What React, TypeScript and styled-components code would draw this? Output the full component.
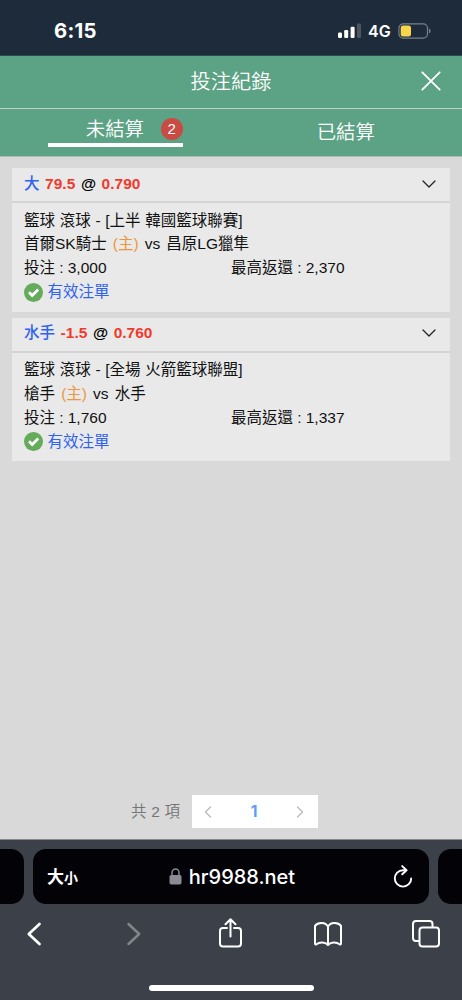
import React from 'react';
import styled, { createGlobalStyle } from 'styled-components';

const GlobalStyle = createGlobalStyle`
  * { box-sizing: border-box; }
  body { margin: 0; background: #d9d9d9; }
`;

const Screen = styled.div`
  display: flex;
  flex-direction: column;
  width: 462px;
  height: 1000px;
  overflow: hidden;
  background: #d9d9d9;
  font-family: 'Liberation Sans', 'Noto Sans CJK TC', sans-serif;
  font-size: 15.5px;
  color: #111;
  white-space: nowrap;
`;

const StatusBar = styled.div`
  display: flex;
  justify-content: space-between;
  height: 56px;
  padding: 20px 31px 0 54px;
  background: #1e2b3b;
  border-bottom: 1px solid #2c4a50;
  color: #fff;
  font-family: Inter, sans-serif;
`;

const Clock = styled.div`
  font-size: 20.3px;
  font-weight: 700;
  line-height: 22px;
  letter-spacing: 0.3px;
`;

const StatusIcons = styled.div`
  display: flex;
  align-items: center;
  height: 22px;
`;

const Network = styled.span`
  width: 30px;
  font-size: 16px;
  font-weight: 600;
  line-height: 22px;
`;

const Header = styled.header`
  display: grid;
  grid-template-columns: 40px 1fr 40px;
  align-items: center;
  justify-items: center;
  height: 53px;
  padding: 0 11px 2px 11px;
  background: #5ca284;
  border-bottom: 1px solid #c0cec4;
  color: #fff;
`;

const Title = styled.h1`
  grid-column: 2;
  margin: 0;
  padding-top: 2px;
  text-align: center;
  font-size: 20.2px;
  font-weight: 350;
  line-height: 30px;
`;

const Tabs = styled.nav`
  display: flex;
  height: 48px;
  background: #5ca284;
  border-bottom: 1px solid #a3c0b1;
`;

const Tab = styled.div<{ $active?: boolean }>`
  display: flex;
  flex: 1;
  justify-content: center;
  padding: ${p => (p.$active ? '4px 0 0' : '8px 1px 0 0')};
  color: #fff;
  font-size: 19.4px;
  font-weight: 350;
  line-height: 30px;
`;

const TabLabel = styled.div`
  display: flex;
  align-items: center;
  justify-content: space-between;
  width: 135px;
  height: 34px;
  padding: 1px 0 0 38px;
  border-bottom: 4px solid #fff;
`;

const Badge = styled.span`
  display: flex;
  align-items: center;
  justify-content: center;
  width: 22px;
  height: 22px;
  border-radius: 50%;
  background: #c94b43;
  font-size: 15px;
  font-weight: 400;
`;

const BetList = styled.main`
  display: flex;
  flex: 1;
  flex-direction: column;
  gap: 6px;
  padding: 11px 12px 0;
`;

const Card = styled.article`
  background: #e9e9e9;
`;

const CardHeader = styled.div`
  display: flex;
  align-items: center;
  justify-content: space-between;
  height: 35px;
  padding: 0 14px 2px 12px;
  border-bottom: 2px solid #d4d4d4;
`;

const Selection = styled.div`
  display: flex;
  gap: 5.6px;
  font-weight: 700;
  line-height: 32px;
  color: #f03a2c;
`;

const Pick = styled.span`
  color: #2f62f0;
  font-weight: 500;
`;

const At = styled.span`
  color: #000;
`;

const CardBody = styled.div`
  height: 108.5px;
  padding: 5.5px 12px 0;
  line-height: 24px;
`;

const Line = styled.div`
  height: 23.8px;
  word-spacing: 0.4px;
`;

const MatchLine = styled(Line)`
  word-spacing: 1.8px;
`;

const AmountLine = styled(Line)`
  display: grid;
  grid-template-columns: 207px 1fr;
  word-spacing: -0.1px;
`;

const Home = styled.span`
  color: #ee963f;
`;

const Status = styled.div`
  display: flex;
  align-items: center;
  gap: 4.5px;
  height: 25px;
  color: #2f62f0;
`;

const Pager = styled.div`
  display: flex;
  justify-content: center;
  gap: 12px;
  height: 44px;
  padding-right: 13px;
  color: #747474;
  line-height: 33px;
`;

const Pages = styled.div`
  display: flex;
  align-items: center;
  justify-content: space-between;
  width: 126px;
  height: 33px;
  padding: 0 14px 0 12px;
  background: #fff;
`;

const Total = styled.span`
  font-weight: 350;
  word-spacing: 0.4px;
`;

const Page = styled.span`
  color: #5c9cf5;
  font-family: Inter, sans-serif;
  font-weight: 700;
`;

const Browser = styled.footer`
  display: flex;
  flex-direction: column;
  height: 161px;
  background: #3c4149;
  border-top: 1px solid #85878a;
  color: #fff;
`;

const AddressRow = styled.div`
  display: grid;
  grid-template-columns: 24px 396px 24px;
  gap: 9px;
  height: 65px;
  padding-top: 9px;
`;

const SideTab = styled.div<{ $right?: boolean }>`
  height: 55px;
  border-radius: ${p => (p.$right ? '13px 0 0 13px' : '0 13px 13px 0')};
  background: #020207;
`;

const AddressBar = styled.div`
  display: grid;
  grid-template-columns: 60px 1fr 60px;
  align-items: center;
  height: 55px;
  padding: 0 16px 0 14px;
  border-radius: 13px;
  background: #020207;
`;

const TextSize = styled.span`
  font-family: 'Noto Sans CJK TC', sans-serif;
  font-size: 17px;
  font-weight: 700;
  line-height: 28px;
`;

const SmallGlyph = styled.span`
  font-size: 14px;
`;

const Address = styled.div`
  display: flex;
  align-items: center;
  justify-content: center;
  gap: 7px;
  padding-left: 4px;
  font-family: Inter, sans-serif;
  font-size: 20px;
  font-weight: 500;
  line-height: 28px;
`;

const Reload = styled.div`
  display: flex;
  justify-content: flex-end;
`;

const Toolbar = styled.div`
  display: flex;
  align-items: center;
  justify-content: space-between;
  height: 56px;
  padding: 2px 21px 0 20px;
`;

const HomeIndicator = styled.div`
  width: 165px;
  height: 6px;
  margin: 24px 0 0 149px;
  border-radius: 3px;
  background: #fff;
`;

const Icon = styled.svg`
  display: block;
  flex: none;
  fill: none;
  stroke: currentColor;
  stroke-linecap: round;
  stroke-linejoin: round;
`;

interface Bet {
  pick: string;
  line: string;
  odds: string;
  league: string;
  home: string;
  away: string;
  stake: string;
  payout: string;
}

const bets: Bet[] = [
  { pick: '大', line: '79.5', odds: '0.790', league: '籃球 滾球 - [上半 韓國籃球聯賽]', home: '首爾SK騎士', away: '昌原LG獵隼', stake: '3,000', payout: '2,370' },
  { pick: '水手', line: '-1.5', odds: '0.760', league: '籃球 滾球 - [全場 火箭籃球聯盟]', home: '槍手', away: '水手', stake: '1,760', payout: '1,337' },
];

const BetCard = ({ bet }: { bet: Bet }) => (
  <Card>
    <CardHeader>
      <Selection>
        <Pick>{bet.pick}</Pick>
        <span>{bet.line}</span>
        <At>@</At>
        <span>{bet.odds}</span>
      </Selection>
      <Icon width="14" height="8" viewBox="0 0 14 8" strokeWidth="1.3" color="#222">
        <path d="M1 1l6 6 6-6" />
      </Icon>
    </CardHeader>
    <CardBody>
      <Line>{bet.league}</Line>
      <MatchLine>{bet.home} <Home>(主)</Home> vs {bet.away}</MatchLine>
      <AmountLine>
        <span>投注 : {bet.stake}</span>
        <span>最高返還 : {bet.payout}</span>
      </AmountLine>
      <Status>
        <Icon width="19" height="19" viewBox="0 0 19 19">
          <circle cx="9.5" cy="9.5" r="9.5" fill="#64ab5c" stroke="none" />
          <path d="M5 9.3l3.2 3.2 6-6" stroke="#fff" strokeWidth="2.7" strokeLinecap="butt" strokeLinejoin="miter" />
        </Icon>
        有效注單
      </Status>
    </CardBody>
  </Card>
);

export default function App() {
  return (
    <Screen>
      <GlobalStyle />
      <StatusBar>
        <Clock>6:15</Clock>
        <StatusIcons>
          <Icon width="31" height="16" viewBox="-1 0 31 16">
            <g fill="#fff" stroke="none">
              <rect x="0" y="9.5" width="4" height="5.5" rx="1.2" />
              <rect x="6.2" y="7" width="4" height="8" rx="1.2" />
              <rect x="12.6" y="3.7" width="4" height="11.3" rx="1.2" />
              <rect x="19" y="0.5" width="4" height="14.5" rx="1.2" fill="#4d5661" />
            </g>
          </Icon>
          <Network>4G</Network>
          <Icon width="33" height="16" viewBox="0 0 33 16">
            <rect x="0.9" y="0.9" width="28.6" height="14.2" rx="4.3" stroke="#78808a" strokeWidth="1.2" />
            <rect x="2.7" y="2.6" width="10.3" height="10.8" rx="2.5" fill="#f8d64c" stroke="none" />
            <path d="M31 5.5c2 .8 2 4.2 0 5z" fill="#78808a" stroke="none" />
          </Icon>
        </StatusIcons>
      </StatusBar>
      <Header>
        <Title>投注紀錄</Title>
        <Icon width="20" height="20" viewBox="0 0 20 20" strokeWidth="1.8">
          <path d="M1.3 1.3l17.4 17.4M18.7 1.3L1.3 18.7" />
        </Icon>
      </Header>
      <Tabs>
        <Tab $active>
          <TabLabel>
            未結算
            <Badge>2</Badge>
          </TabLabel>
        </Tab>
        <Tab>已結算</Tab>
      </Tabs>
      <BetList>
        {bets.map(bet => <BetCard key={bet.pick} bet={bet} />)}
      </BetList>
      <Pager>
        <Total>共 2 項</Total>
        <Pages>
          <Icon width="8" height="12" viewBox="0 0 8 12" strokeWidth="1.4" color="#b8bbc3">
            <path d="M6.5 1L1.5 6l5 5" />
          </Icon>
          <Page>1</Page>
          <Icon width="8" height="12" viewBox="0 0 8 12" strokeWidth="1.4" color="#b8bbc3">
            <path d="M1.5 1l5 5-5 5" />
          </Icon>
        </Pages>
      </Pager>
      <Browser>
        <AddressRow>
          <SideTab />
          <AddressBar>
            <TextSize>大<SmallGlyph>小</SmallGlyph></TextSize>
            <Address>
              <Icon width="13" height="17" viewBox="0 0 13 17">
                <rect x="0.5" y="7" width="12" height="9.5" rx="1.8" fill="#8b8b93" stroke="none" />
                <path d="M3 7V4.500a3.500 3.500 0 0 1 7 0V7" stroke="#8b8b93" strokeWidth="1.5" />
              </Icon>
              hr9988.net
            </Address>
            <Reload>
              <Icon width="20" height="24" viewBox="0 0 20 24" strokeWidth="1.9">
                <path d="M13.6 5.2H10A8.2 8.2 0 1 0 18.2 13.4M9.2 1.1l4.4 4.1-4.4 4.1" />
              </Icon>
            </Reload>
          </AddressBar>
          <SideTab $right />
        </AddressRow>
        <Toolbar>
          <Icon width="28" height="24" viewBox="0 0 28 24" strokeWidth="2.7">
            <path d="M19.5 2L8.8 12l10.7 10" />
          </Icon>
          <Icon width="28" height="24" viewBox="-2 0 28 24" strokeWidth="2.5" color="#828589">
            <path d="M9.5 2l10.700 10L9.500 22" />
          </Icon>
          <Icon width="28" height="32" viewBox="-3.5 0.5 28 32" strokeWidth="2">
            <path d="M8.500 10.500H4.500a3 3 0 0 0-3 3V26a3 3 0 0 0 3 3h15a3 3 0 0 0 3-3V13.500a3 3 0 0 0-3-3h-4M12 19V2M7 6.700L12 1.700l5 5" />
          </Icon>
          <Icon width="30" height="26" viewBox="-2 0 30 26" strokeWidth="2">
            <path d="M14 5.500C11.500.8 4 .8 1 4.800V22.800c0 .8.800.9 1.400.5 3.200-2.400 8.600-2.400 11.600.7 3-3.100 8.400-3.100 11.600-.7.600.4 1.400.3 1.400-.5V4.800C24 .8 16.500.8 14 5.500V23.500" />
          </Icon>
          <Icon width="30" height="28" viewBox="0 0 30 28" strokeWidth="2">
            <path d="M8 21H5a3 3 0 0 1-3-3V4a3 3 0 0 1 3-3h13.500a3 3 0 0 1 3 3v3" />
            <rect x="8.5" y="7.5" width="19.5" height="19" rx="3" />
          </Icon>
        </Toolbar>
        <HomeIndicator />
      </Browser>
    </Screen>
  );
}
